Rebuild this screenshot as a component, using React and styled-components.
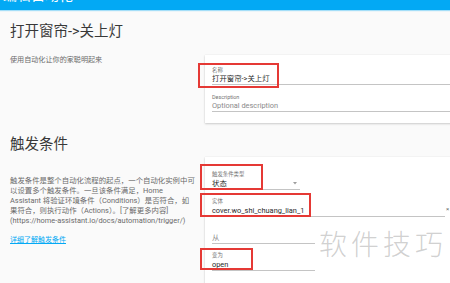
import React from 'react';
import styled, { createGlobalStyle } from 'styled-components';

const Global = createGlobalStyle`
  html, body { margin: 0; padding: 0; background: #fafafa; overflow: hidden; }
  body { width: 450px; height: 283px; font-family: Roboto, "Noto Sans CJK SC", sans-serif; }
`;

const Page = styled.div`
  position: relative;
  width: 470px;
  height: 283px;
  overflow: hidden;
  background: #fafafa;
`;

const AppBar = styled.header`
  position: relative;
  z-index: 1;
  height: 10px;
  background: #03a9f4;
  overflow: hidden;
  padding-left: 3px;
  box-shadow: 0 1px 1px rgba(3, 169, 244, 0.35);
`;

const AppTitle = styled.div`
  color: #fff;
  font-size: 14px;
  line-height: 14px;
  margin-top: -12px;
  white-space: nowrap;
`;

const Section = styled.section`
  padding-left: 10px;
  margin-top: ${p => p.$top}px;
`;

const Heading = styled.h1`
  margin: 0;
  font-size: 14.5px;
  line-height: 18px;
  font-weight: 400;
  color: #383838;
`;

const Row = styled.div`
  display: grid;
  grid-template-columns: 190px 255px;
  column-gap: 5px;
  align-items: start;
  margin-top: ${p => p.$gap}px;
`;

const Intro = styled.div`
  padding-top: ${p => p.$top}px;
  color: #6a6a6a;
`;

const IntroLine = styled.div`
  font-size: ${p => p.$size}px;
  line-height: 10px;
  white-space: nowrap;
`;

const LearnLink = styled.a`
  display: block;
  margin-top: 9px;
  font-size: 7px;
  line-height: 10px;
  color: #03a9f4;
  text-decoration: underline;
  white-space: nowrap;
`;

const Card = styled.div`
  background: #fff;
  box-shadow: 0 1px 2px rgba(0, 0, 0, 0.18), 0 0 1px rgba(0, 0, 0, 0.1);
  padding: ${p => p.$pad};
  display: flex;
  flex-direction: column;
  gap: 8.5px;
`;

const FieldRow = styled.div`
  display: flex;
  align-items: flex-end;
`;

const Field = styled.div`
  position: relative;
  width: ${p => p.$w ? `${p.$w}px` : 'auto'};
  flex: ${p => p.$w ? 'none' : '1'};
`;

const Label = styled.div`
  height: 7.5px;
  font-size: 5.4px;
  line-height: 7.5px;
  color: #737373;
  white-space: nowrap;
`;

const Value = styled.div`
  display: flex;
  align-items: center;
  justify-content: space-between;
  height: 10px;
  font-size: 7.4px;
  line-height: 10px;
  color: ${p => p.$muted ? '#8a8a8a' : '#2a2a2a'};
  border-bottom: 1px solid #c4c4c4;
  white-space: nowrap;
`;

const Caret = styled.svg`
  width: 4px;
  height: 3px;
  margin-right: 3px;
`;

const Clear = styled.span`
  font-size: 6px;
  line-height: 10px;
  color: #666;
  margin: 0 0 3px 1px;
`;

const RedBox = styled.div`
  position: absolute;
  left: ${p => p.$l}px;
  top: ${p => p.$t}px;
  width: ${p => p.$w}px;
  height: ${p => p.$h}px;
  border: 2px solid #e53935;
  box-sizing: border-box;
  pointer-events: none;
`;

const Watermark = styled.div`
  position: absolute;
  left: 319px;
  top: 229px;
  font-family: "Noto Sans CJK SC", sans-serif;
  font-size: 28px;
  line-height: 28px;
  letter-spacing: 4px;
  font-weight: 300;
  color: rgba(150, 150, 150, 0.45);
  white-space: nowrap;
  pointer-events: none;
`;

export default function App() {
  return (
    <Page>
      <Global />
      <AppBar>
        <AppTitle>编辑自动化</AppTitle>
      </AppBar>

      <Section $top={13}>
        <Heading>打开窗帘-&gt;关上灯</Heading>
        <Row $gap={14}>
          <Intro $top={0}>
            <IntroLine $size={7.1}>使用自动化让你的家聪明起来</IntroLine>
          </Intro>
          <Card $pad="11.5px 0 11px 7px">
            <Field>
              <Label>名称</Label>
              <Value>打开窗帘-&gt;关上灯</Value>
              <RedBox $l={-14} $t={-3.5} $w={81} $h={25} />
            </Field>
            <Field>
              <Label>Description</Label>
              <Value $muted>Optional description</Value>
            </Field>
          </Card>
        </Row>
      </Section>

      <Section $top={13}>
        <Heading>触发条件</Heading>
        <Row $gap={3}>
          <Intro $top={19}>
            <IntroLine $size={7.4}>触发条件是整个自动化流程的起点，一个自动化实例中可</IntroLine>
            <IntroLine $size={7.4}>以设置多个触发条件。一旦该条件满足，Home</IntroLine>
            <IntroLine $size={7.4}>Assistant 将验证环境条件（Conditions）是否符合，如</IntroLine>
            <IntroLine $size={7.4}>果符合，则执行动作（Actions）。[了解更多内容]</IntroLine>
            <IntroLine $size={7.4}>(https://home-assistant.io/docs/automation/trigger/)</IntroLine>
            <LearnLink href="#">详细了解触发条件</LearnLink>
          </Intro>
          <Card $pad="14px 0 30px 7px">
            <Field $w={88}>
              <Label>触发条件类型</Label>
              <Value>
                状态
                <Caret viewBox="0 0 4 3"><path d="M0 0 L4 0 L2 2.5 Z" fill="#9e9e9e" /></Caret>
              </Value>
              <RedBox $l={-12} $t={-7} $w={63} $h={26} />
            </Field>
            <FieldRow>
              <Field $w={233}>
                <Label>实体</Label>
                <Value>cover.wo_shi_chuang_lian_1</Value>
                <RedBox $l={-12} $t={-5} $w={111} $h={24} />
              </Field>
              <Clear>×</Clear>
            </FieldRow>
            <Field $w={103}>
              <Label />
              <Value $muted>从</Value>
            </Field>
            <Field $w={103}>
              <Label>变为</Label>
              <Value>open</Value>
              <RedBox $l={-12} $t={-4} $w={53} $h={22} />
            </Field>
          </Card>
        </Row>
      </Section>

      <Watermark>软件技巧</Watermark>
    </Page>
  );
}
